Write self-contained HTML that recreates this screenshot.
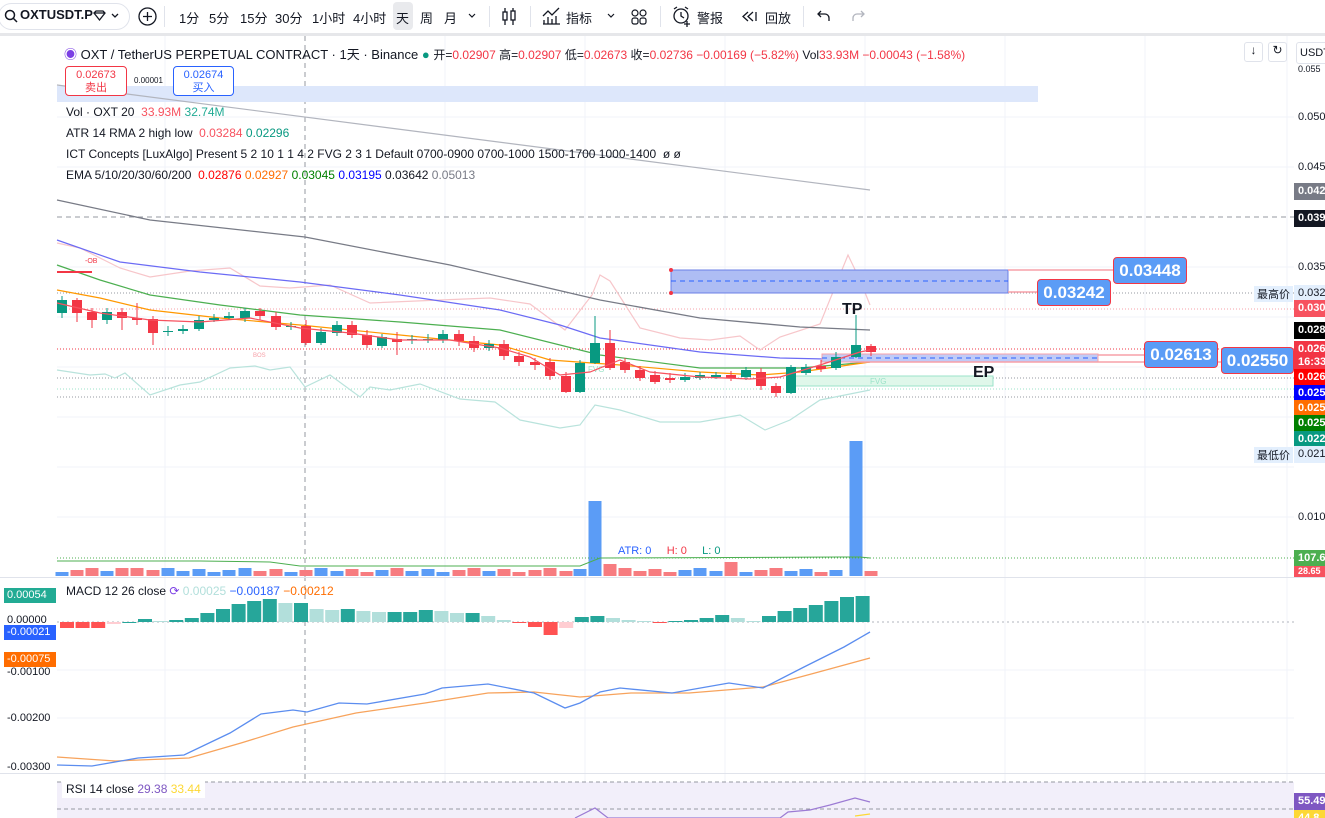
<!DOCTYPE html>
<html><head><meta charset="utf-8">
<style>
*{margin:0;padding:0;box-sizing:border-box}
body{width:1325px;height:818px;overflow:hidden;background:#fff;font-family:"Liberation Sans","Noto Sans CJK SC",sans-serif;color:#131722;position:relative}
.tb{position:absolute;left:0;top:0;width:1325px;height:33px;background:#fff;font-size:13px}
.tb span{position:absolute;top:8px;white-space:nowrap}
.tb svg{position:absolute}
.sep{position:absolute;top:0;width:1325px;height:3px;background:#e6e7ea}
.abs{position:absolute;white-space:nowrap}
.t12{font-size:12px}
.ax{position:absolute;left:1298px;font-size:11px;color:#131722}
.tag{position:absolute;left:1294px;width:31px;height:17px;color:#fff;font-size:11px;font-weight:bold;padding:2px 0 0 4px;overflow:hidden}
.lb{position:absolute;background:#5b9cf6;border:1px solid #f23645;border-radius:4px;color:#fff;font-weight:bold;font-size:17px;text-align:center;line-height:25px}
.ml{position:absolute;left:7px;font-size:11px;color:#131722}
.mt{position:absolute;left:4px;width:52px;height:15px;color:#fff;font-size:11px;padding:1px 0 0 3px}
</style></head><body>
<div class="tb">
<svg style="left:4px;top:9px" width="14" height="14" viewBox="0 0 14 14" fill="none" stroke="#131722" stroke-width="1.5"><circle cx="6" cy="6" r="4.5"/><line x1="9.5" y1="9.5" x2="13" y2="13"/></svg>
<span style="left:20px;top:7px;font-weight:bold">OXTUSDT.P</span>
<svg style="left:92px;top:10px" width="30" height="12" viewBox="0 0 30 12" fill="none" stroke="#131722" stroke-width="1.3"><path d="M2 3 L4 1 H11 L13 3 L7.5 10 Z M2 3 H13"/><path d="M20 4 L23 7 L26 4"/></svg>
<div class="abs" style="left:-2px;top:3px;width:132px;height:27px;border:1px solid #e0e3eb;border-radius:14px"></div>
<svg style="left:138px;top:7px" width="19" height="19" viewBox="0 0 19 19" fill="none" stroke="#131722" stroke-width="1.3"><circle cx="9.5" cy="9.5" r="8.5"/><path d="M9.5 5v9M5 9.5h9"/></svg>
<span style="left:179px">1分</span><span style="left:209px">5分</span><span style="left:240px">15分</span><span style="left:275px">30分</span><span style="left:312px">1小时</span><span style="left:353px">4小时</span>
<div class="abs" style="left:393px;top:2px;width:20px;height:28px;background:#e9eaed;border-radius:4px"></div>
<span style="left:396px">天</span><span style="left:420px">周</span><span style="left:444px">月</span>
<svg style="left:467px;top:12px" width="10" height="8" viewBox="0 0 10 8" fill="none" stroke="#131722" stroke-width="1.2"><path d="M2 2l3 3 3-3"/></svg>
<svg style="left:501px;top:7px" width="16" height="19" viewBox="0 0 16 19" fill="none" stroke="#131722" stroke-width="1.3"><path d="M4 1v17M12 1v17"/><rect x="2" y="5" width="4" height="8" fill="#fff"/><rect x="10" y="4" width="4" height="9" fill="#fff"/></svg>
<svg style="left:542px;top:7px" width="19" height="18" viewBox="0 0 19 18" fill="none" stroke="#131722" stroke-width="1.3"><path d="M1 9l5-5 4 4 7-7"/><path d="M2 17v-4M6 17v-7M10 17v-5M14 17v-8M1 17h17"/></svg>
<span style="left:566px">指标</span>
<svg style="left:606px;top:12px" width="10" height="8" viewBox="0 0 10 8" fill="none" stroke="#131722" stroke-width="1.2"><path d="M2 2l3 3 3-3"/></svg>
<svg style="left:631px;top:9px" width="16" height="16" viewBox="0 0 16 16" fill="none" stroke="#131722" stroke-width="1.2"><circle cx="4" cy="4" r="3"/><circle cx="12" cy="4" r="3"/><rect x="1" y="9" width="6" height="6" rx="2"/><rect x="9" y="9" width="6" height="6" rx="2"/></svg>
<svg style="left:672px;top:6px" width="20" height="21" viewBox="0 0 20 21" fill="none" stroke="#131722" stroke-width="1.3"><circle cx="9" cy="10" r="7"/><path d="M9 6v4l3 2M2 3l3-2M16 3l-3-2M15 15v6M12 18h6"/></svg>
<span style="left:697px">警报</span>
<svg style="left:742px;top:11px" width="16" height="11" viewBox="0 0 16 11" fill="none" stroke="#131722" stroke-width="1.3"><path d="M6 1L1 5.5 6 10M11 1L6 5.5 11 10M14 1v9"/></svg>
<span style="left:765px">回放</span>
<svg style="left:817px;top:10px" width="14" height="12" viewBox="0 0 14 12" fill="none" stroke="#131722" stroke-width="1.3"><path d="M4 1L1 4l3 3M1 4h7a4 4 0 0 1 4 4v3"/></svg>
<svg style="left:851px;top:10px" width="14" height="12" viewBox="0 0 14 12" fill="none" stroke="#b2b5be" stroke-width="1.3"><path d="M10 1l3 3-3 3M13 4H6a4 4 0 0 0-4 4v3"/></svg>
<div class="abs" style="left:164px;top:6px;width:1px;height:21px;background:#e0e3eb"></div>
<div class="abs" style="left:489px;top:6px;width:1px;height:21px;background:#e0e3eb"></div>
<div class="abs" style="left:530px;top:6px;width:1px;height:21px;background:#e0e3eb"></div>
<div class="abs" style="left:660px;top:6px;width:1px;height:21px;background:#e0e3eb"></div>
<div class="abs" style="left:803px;top:6px;width:1px;height:21px;background:#e0e3eb"></div>
</div>
<div class="sep" style="top:33px"></div>

<svg class="abs" style="left:0;top:36px" width="1325" height="782" viewBox="0 36 1325 782" id="sv">
<g stroke="#f0f3fa" stroke-width="1">
<line x1="57" y1="117" x2="1294" y2="117"/><line x1="57" y1="167" x2="1294" y2="167"/><line x1="57" y1="267" x2="1294" y2="267"/><line x1="57" y1="317" x2="1294" y2="317"/><line x1="57" y1="367" x2="1294" y2="367"/><line x1="57" y1="417" x2="1294" y2="417"/><line x1="57" y1="467" x2="1294" y2="467"/><line x1="57" y1="517" x2="1294" y2="517"/>
<line x1="57" y1="670" x2="1294" y2="670"/><line x1="57" y1="718" x2="1294" y2="718"/>
<line x1="165" y1="36" x2="165" y2="818"/><line x1="445" y1="36" x2="445" y2="818"/><line x1="585" y1="36" x2="585" y2="818"/><line x1="725" y1="36" x2="725" y2="818"/><line x1="865" y1="36" x2="865" y2="818"/><line x1="1005" y1="36" x2="1005" y2="818"/><line x1="1145" y1="36" x2="1145" y2="818"/>
<line x1="1287" y1="36" x2="1287" y2="818"/>
</g>
<line x1="305" y1="36" x2="305" y2="818" stroke="#9598a1" stroke-dasharray="5,4"/>
<rect x="57" y="86" width="981" height="16" fill="#dde7fb"/>
<line x1="57" y1="85" x2="870" y2="190" stroke="#b2b5be" stroke-width="1.2"/>
<g fill="none" stroke-width="1">
<line x1="57" y1="217" x2="1294" y2="217" stroke="#9598a1" stroke-dasharray="5,4"/>
<line x1="57" y1="293" x2="1294" y2="293" stroke="#9598a1" stroke-dasharray="1,2"/>
<line x1="57" y1="309" x2="1294" y2="309" stroke="#f7a0a8" stroke-dasharray="1,2"/>
<line x1="57" y1="349" x2="1294" y2="349" stroke="#f23645" stroke-dasharray="1,2"/>
<line x1="57" y1="378" x2="1294" y2="378" stroke="#9598a1" stroke-dasharray="1,2"/>
<line x1="57" y1="397" x2="1294" y2="397" stroke="#9598a1" stroke-dasharray="1,2"/>
<line x1="57" y1="389" x2="1294" y2="389" stroke="#9be3c9" stroke-dasharray="1,2"/>
</g>
<polyline fill="none" stroke="#f7c6ca" stroke-width="1.2" points="57,243 80,248 120,268 150,277 190,271 230,268 260,286 290,288 330,285 370,303 440,300 490,298 530,304 565,330 592,295 600,275 610,281 640,328 680,338 710,340 740,336 760,350 780,337 820,324 848,255 860,280 870,305"/>
<polyline fill="none" stroke="#b9e3dc" stroke-width="1.2" points="57,370 90,375 105,374 115,378 125,373 150,395 180,385 200,382 230,368 255,366 270,370 290,367 305,387 330,375 360,397 370,387 390,390 420,384 460,399 495,402 520,420 560,428 580,425 595,405 620,410 660,422 700,422 740,415 765,430 790,420 820,400 870,390"/>
<polyline fill="none" stroke="#787b86" stroke-width="1.3" points="57,200 150,220 305,237 450,265 600,300 700,318 800,327 870,330"/>
<polyline fill="none" stroke="#6b6bf5" stroke-width="1.2" points="57,240 120,262 200,272 300,282 400,295 500,310 560,325 600,338 700,352 780,358 870,360"/>
<polyline fill="none" stroke="#4caf50" stroke-width="1.2" points="57,265 100,280 150,295 220,305 300,315 400,322 500,330 560,345 600,355 700,368 800,368 870,362"/>
<polyline fill="none" stroke="#ff9800" stroke-width="1.2" points="57,290 100,298 150,310 220,318 300,325 400,335 500,345 550,360 620,365 700,372 760,375 800,372 870,362"/>
<line x1="57" y1="272" x2="92" y2="272" stroke="#f23645" stroke-width="2"/>
<rect x="671" y="270" width="337" height="23" fill="#aebdf4" stroke="#6b7fe6"/>
<line x1="671" y1="281" x2="1008" y2="281" stroke="#2962ff" stroke-dasharray="5,4"/>
<line x1="1008" y1="270" x2="1113" y2="270" stroke="#f7a0a8" stroke-width="1.5"/>
<line x1="1008" y1="292" x2="1037" y2="292" stroke="#f7a0a8" stroke-width="1.5"/>
<circle cx="671" cy="270" r="2" fill="#f23645"/><circle cx="671" cy="293" r="2" fill="#f23645"/>
<rect x="822" y="354" width="276" height="8" fill="#c0cbf7" stroke="#f7a0a8"/>
<line x1="822" y1="358" x2="1098" y2="358" stroke="#2962ff" stroke-dasharray="5,4"/>
<line x1="1098" y1="355" x2="1144" y2="355" stroke="#f7a0a8" stroke-width="1.5"/>
<line x1="850" y1="362" x2="1221" y2="362" stroke="#f7a0a8" stroke-width="1.5"/>
<rect x="790" y="376" width="203" height="10" fill="#dff7ea" stroke="#9be3c9"/>
<text x="870" y="384" font-size="8" fill="#9be3c9" font-family="Liberation Sans">FVG</text>
<text x="588" y="372" font-size="8" fill="#9be3c9" font-family="Liberation Sans">FVG</text>
<text x="85" y="263" font-size="7" fill="#f23645" font-family="Liberation Sans">-OB</text>
<text x="253" y="357" font-size="6" fill="#f7a0a8" font-family="Liberation Sans">BOS</text>
<g id="cd"></g>
<polyline fill="none" stroke="#f7525f" stroke-width="1.2" points="57,303 100,313 150,320 200,322 250,318 300,328 350,333 400,340 450,340 500,348 530,357 560,375 590,372 620,360 650,372 700,377 750,379 780,377 820,365 860,352 870,350"/>
<text x="842" y="314" font-size="16" font-weight="bold" fill="#131722" font-family="Liberation Sans">TP</text>
<text x="973" y="377" font-size="16" font-weight="bold" fill="#131722" font-family="Liberation Sans">EP</text>
<g id="vol"></g>
<polyline fill="none" stroke="#4caf50" stroke-width="1" points="57,561 200,561 270,562 300,566 580,566 600,558 840,557 850,557 860,557 870,558"/>
<line x1="57" y1="558" x2="1294" y2="558" stroke="#4caf50" stroke-dasharray="1,2"/>
<line x1="0" y1="577.5" x2="1325" y2="577.5" stroke="#e0e3eb"/>
<line x1="57" y1="622" x2="1294" y2="622" stroke="#b2b5be" stroke-dasharray="2,3"/>
<g id="hist"></g>
<polyline fill="none" stroke="#f7a35c" stroke-width="1.3" points="57,757 115,761 189,758 241,743 293,727 356,713 425,703 488,693 534,692 580,697 631,693 689,693 763,687 815,673 870,658"/>
<polyline fill="none" stroke="#5b8def" stroke-width="1.3" points="57,765 92,766 138,758 184,755 230,733 261,714 293,710 307,712 339,703 367,704 425,694 442,688 488,684 534,693 565,708 580,703 600,692 620,688 672,693 729,683 763,688 804,667 844,647 870,632"/>
<line x1="0" y1="773.5" x2="1325" y2="773.5" stroke="#e0e3eb"/>
<rect x="57" y="782" width="1237" height="36" fill="#f2effa"/>
<line x1="57" y1="782" x2="1294" y2="782" stroke="#9598a1" stroke-dasharray="4,3"/>
<line x1="57" y1="809" x2="1294" y2="809" stroke="#9598a1" stroke-dasharray="4,3"/>
<polyline fill="none" stroke="#9c7bd4" stroke-width="1.2" points="575,818 595,808 608,818 780,818 788,812 810,810 830,805 855,798 870,802"/>
<line x1="855" y1="816" x2="870" y2="814" stroke="#fdd835" stroke-width="1.3"/>
</svg>

<div class="abs t12" style="left:64px;top:44px;font-size:13px"><span style="color:#7b3fe4">&#9673;</span> OXT / TetherUS PERPETUAL CONTRACT · 1天 · Binance <span style="color:#089981">&#9679;</span> <span style="font-size:12px">开=<b style="font-weight:normal;color:#f23645">0.02907</b> 高=<b style="font-weight:normal;color:#f23645">0.02907</b> 低=<b style="font-weight:normal;color:#f23645">0.02673</b> 收=<b style="font-weight:normal;color:#f23645">0.02736 −0.00169 (−5.82%)</b> Vol<b style="font-weight:normal;color:#f23645">33.93M −0.00043 (−1.58%)</b></span></div>
<div class="abs" style="left:1244px;top:42px;width:19px;height:20px;border:1px solid #e0e3eb;border-radius:3px;font-size:12px;text-align:center">&#8595;</div>
<div class="abs" style="left:1268px;top:42px;width:19px;height:20px;border:1px solid #e0e3eb;border-radius:3px;font-size:12px;text-align:center">&#8635;</div>
<div class="abs" style="left:1296px;top:42px;width:32px;height:22px;border:1px solid #e0e3eb;border-radius:3px;font-size:11px;padding:4px 0 0 3px;background:#fff">USDT</div>
<div class="abs" style="left:65px;top:66px;width:62px;height:30px;border:1px solid #f23645;border-radius:4px;background:#fff;text-align:center;font-size:11px;color:#f23645;line-height:13px;padding-top:2px">0.02673<br>卖出</div>
<div class="abs" style="left:134px;top:76px;font-size:8px">0.00001</div>
<div class="abs" style="left:173px;top:66px;width:61px;height:30px;border:1px solid #2962ff;border-radius:4px;background:#fff;text-align:center;font-size:11px;color:#2962ff;line-height:13px;padding-top:2px">0.02674<br>买入</div>
<div class="abs t12" style="left:66px;top:105px">Vol · OXT 20 &nbsp;<span style="color:#f7525f">33.93M</span> <span style="color:#22ab94">32.74M</span></div>
<div class="abs t12" style="left:66px;top:126px">ATR 14 RMA 2 high low &nbsp;<span style="color:#f7525f">0.03284</span> <span style="color:#089981">0.02296</span></div>
<div class="abs t12" style="left:66px;top:147px">ICT Concepts [LuxAlgo] Present 5 2 10 1 1 4 2 FVG 2 3 1 Default 0700-0900 0700-1000 1500-1700 1000-1400 &nbsp;ø ø</div>
<div class="abs t12" style="left:66px;top:168px">EMA 5/10/20/30/60/200 &nbsp;<span style="color:#ff0000">0.02876</span> <span style="color:#ff6d00">0.02927</span> <span style="color:#008000">0.03045</span> <span style="color:#0000ff">0.03195</span> <span>0.03642</span> <span style="color:#787b86">0.05013</span></div>

<div class="lb" style="left:1113px;top:257px;width:74px;height:27px">0.03448</div>
<div class="lb" style="left:1037px;top:279px;width:74px;height:27px">0.03242</div>
<div class="lb" style="left:1144px;top:341px;width:74px;height:27px">0.02613</div>
<div class="lb" style="left:1221px;top:347px;width:73px;height:27px">0.02550</div>

<div class="ax" style="top:64px;font-size:9px">0.055</div>
<div class="ax" style="top:111px">0.050</div>
<div class="ax" style="top:161px">0.045</div>
<div class="ax" style="top:261px">0.035</div>
<div class="ax" style="top:307px">0.030</div>
<div class="ax" style="top:449px">0.015</div>
<div class="ax" style="top:511px">0.010</div>
<div class="tag" style="top:183px;background:#787b86">0.042</div>
<div class="tag" style="top:210px;background:#131722">0.039</div>
<div class="abs" style="left:1254px;top:286px;font-size:11px;background:#e3effd;padding:0 3px">最高价</div>
<div class="tag" style="top:285px;background:#e3effd;color:#131722;font-weight:normal">0.032</div>
<div class="tag" style="top:300px;background:#f7525f">0.030</div>
<div class="tag" style="top:322px;background:#000">0.028</div>
<div class="tag" style="top:341px;height:28px;background:#f23645;line-height:13px">0.026<br>16:33</div>
<div class="tag" style="top:369px;background:#ff0000">0.026</div>
<div class="tag" style="top:385px;background:#0000ff">0.025</div>
<div class="tag" style="top:400px;background:#ff6d00">0.025</div>
<div class="tag" style="top:415px;background:#008000">0.025</div>
<div class="tag" style="top:431px;background:#089981">0.022</div>
<div class="abs" style="left:1254px;top:447px;font-size:11px;background:#e3effd;padding:0 3px">最低价</div>
<div class="tag" style="top:446px;background:#e3effd;color:#131722;font-weight:normal">0.021</div>
<div class="tag" style="top:550px;background:#4caf50">107.6</div>
<div class="tag" style="top:566px;height:11px;background:#f7525f;font-size:9px;padding-top:0">28.65</div>
<div class="abs" style="left:618px;top:545px;font-size:11px;color:#2962ff">ATR: 0 &nbsp;&nbsp;&nbsp; <span style="color:#f23645">H: 0</span> &nbsp;&nbsp;&nbsp; <span style="color:#089981">L: 0</span></div>

<div class="mt" style="top:588px;background:#22ab94">0.00054</div>
<div class="abs t12" style="left:66px;top:584px">MACD 12 26 close <span style="color:#7b3fe4">&#10227;</span> <span style="color:#b2dfdb">0.00025</span> <span style="color:#2962ff">−0.00187</span> <span style="color:#ff6d00">−0.00212</span></div>
<div class="ml" style="top:614px">0.00000</div>
<div class="mt" style="top:625px;background:#2962ff">-0.00021</div>
<div class="ml" style="top:666px">-0.00100</div>
<div class="mt" style="top:652px;background:#ff6d00">-0.00075</div>
<div class="ml" style="top:712px">-0.00200</div>
<div class="ml" style="top:761px">-0.00300</div>
<div class="abs t12" style="left:62px;top:780px;background:#fff;padding:2px 4px">RSI 14 close <span style="color:#7e57c2">29.38</span> <span style="color:#fdd835">33.44</span></div>
<div class="tag" style="top:793px;background:#7e57c2">55.49</div>
<div class="tag" style="top:810px;background:#fdd835;height:8px">44.8</div>

<script>
var NS="http://www.w3.org/2000/svg";
function el(p,t,a){var e=document.createElementNS(NS,t);for(var k in a)e.setAttribute(k,a[k]);p.appendChild(e);}
var C=[[62,0,300,313,296,318],[77,1,300,313,298,322],[92,1,312,320,308,328],[107,0,312,320,308,324],[122,1,312,318,308,330],[137,1,318,320,303,325],[153,1,319,333,316,345],[168,0,331,332,326,336],[183,0,329,331,325,334],[199,0,320,329,316,331],[214,0,318,320,314,322],[229,0,316,318,312,320],[245,0,311,318,308,322],[260,1,311,316,308,320],[276,1,316,327,312,330],[291,0,326,327,322,330],[306,1,326,343,320,345],[321,0,332,343,328,345],[337,0,325,333,321,336],[352,1,325,335,321,338],[367,1,335,345,330,348],[382,0,337,346,334,348],[397,1,339,342,332,355],[412,0,339,340,335,344],[428,0,339,340,334,343],[443,0,334,340,330,343],[459,1,334,341,330,346],[474,1,341,348,336,352],[489,0,344,348,340,351],[504,1,344,356,340,360],[519,1,356,362,352,366],[535,1,362,365,358,370],[550,1,362,376,358,380],[566,1,376,392,372,393],[580,0,363,392,360,393],[595,0,343,363,316,364],[610,1,343,368,330,370],[625,1,362,370,358,373],[640,1,370,378,366,381],[655,1,375,382,371,384],[670,1,378,380,373,383],[685,0,377,380,373,382],[700,0,375,378,372,380],[716,0,375,377,372,379],[731,1,375,378,371,381],[746,0,370,377,367,380],[761,1,372,386,368,390],[776,1,386,393,383,397],[791,0,367,393,365,394],[806,0,367,373,364,375],[821,1,366,369,360,372],[836,0,357,368,352,370],[856,0,345,357,315,358],[871,1,346,352,344,356]];
var cd=document.getElementById('cd');
C.forEach(function(c){var col=c[1]?'#f23645':'#089981';el(cd,'line',{x1:c[0],x2:c[0],y1:c[4],y2:c[5],stroke:col,'stroke-width':1});el(cd,'rect',{x:c[0]-5,y:c[2],width:10,height:Math.max(1,c[3]-c[2]),fill:col});});
var vol=document.getElementById('vol');
C.forEach(function(c,i){var h=4+((i*7)%5);if(c[0]==595)h=75;if(c[0]==856)h=135;if(c[0]==731)h=14;if(c[0]==610)h=12;if(c[0]==122||c[0]==137)h=8;var col=c[1]?'#f77c80':'#5b9cf6';el(vol,'rect',{x:c[0]-6.5,y:576-h,width:13,height:h,fill:col});});
var H=[-6,-6,-6,-2,0,3,1,2,4,9,13,18,21,23,19,19,13,12,13,11,10,10,10,12,11,9,9,6,2,-1,-5,-13,-6,5,6,4,2,1,-1,1,2,4,7,4,1,6,11,14,17,21,25,26];
var hg=document.getElementById('hist');
H.forEach(function(v,i){var x=60+i*15.6;var p=i?H[i-1]:v;var col;if(v>=0)col=v>=p?'#26a69a':'#b2dfdb';else col=v<=p?'#ff5252':'#ffcdd2';var y=v>=0?622-v:622;el(hg,'rect',{x:x,y:y,width:14,height:Math.max(1,Math.abs(v)),fill:col});});
</script>
</body></html>
